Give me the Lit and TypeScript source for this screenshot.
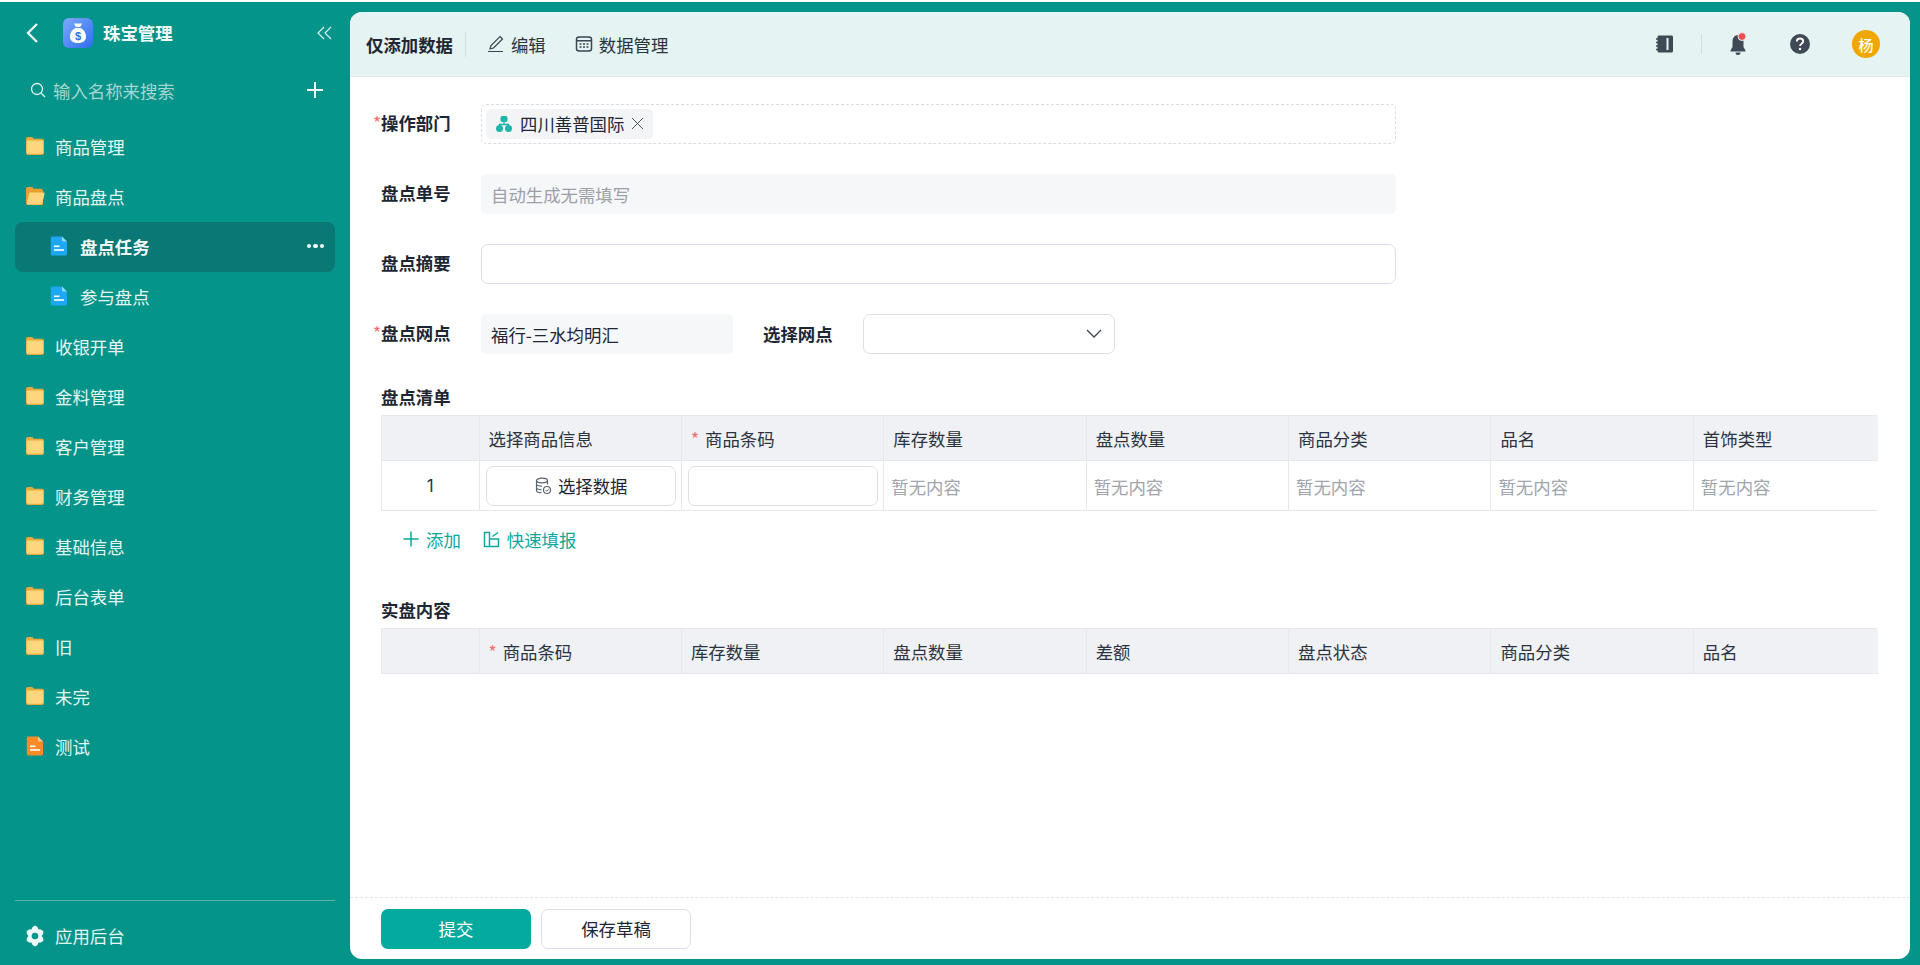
import { LitElement, html, css, svg } from 'lit'
import { customElement } from 'lit/decorators.js'

const folder = svg`<svg class="ico" width="20" height="20" viewBox="0 0 20 20"><path d="M1 3C1 1.800 1.900 1 3 1h3.600c.7 0 1.100.3 1.500.8l.7 1H17c1.200 0 2 .8 2 2V17c0 1.200-.8 2-2 2H3c-1.100 0-2-.8-2-2z" fill="#e8a93c"/><path d="M1.700 6c0-.9.600-1.400 1.400-1.400h13.800c.8 0 1.400.5 1.400 1.400v10.300c0 .9-.6 1.400-1.400 1.400H3.100c-.8 0-1.400-.5-1.400-1.400z" fill="#ffd67d"/></svg>`

const folderOpen = svg`<svg class="ico" width="20" height="20" viewBox="0 0 20 20"><path d="M1 3C1 1.800 1.900 1 3 1h3.600c.7 0 1.100.3 1.500.8l.7 1H16c1.200 0 2 .8 2 2v14.200H3c-1.100 0-2-.8-2-2z" fill="#e8a02c"/><path d="M5.200 6.500h13c.9 0 1.500.7 1.300 1.500l-2.200 9.200c-.2.800-.9 1.300-1.700 1.300H3c-.9 0-1.300-.6-1.100-1.400l2-9c.2-.9.500-1.600 1.300-1.600z" fill="#ffd67d"/></svg>`

const doc = (c: string) => svg`<svg class="ico" width="18" height="20" viewBox="0 0 18 20"><path d="M2.500 .5h9.500l5 5v12.300c0 1-.8 1.700-1.700 1.700H2.500c-1 0-1.700-.7-1.700-1.700V2.200C.8 1.200 1.500.5 2.500.5z" fill="${c}"/><path d="M12 .5l5 5h-3.400c-.9 0-1.600-.7-1.600-1.600z" fill="#ffffff" opacity=".55"/><rect x="4" y="9.500" width="5.500" height="1.600" fill="#fff"/><rect x="4" y="13.200" width="10" height="1.600" fill="#fff"/></svg>`

const gear = svg`<svg width="20" height="22" viewBox="0 0 24 26"><path fill-rule="evenodd" fill="#eef8f7" d="M12 .5l3 1.800 1 2.600 2.900.2 3 1.900v3.400L20 13l1.900 2.600V19l-3 1.900-2.900.2-1 2.600-3 1.800-3-1.800-1-2.600-2.900-.2-3-1.900v-3.400L4 13l-1.900-2.600V7l3-1.900 2.900-.2 1-2.600zM12 9a4 4 0 1 0 0 8 4 4 0 0 0 0-8z"/></svg>`

interface MenuItem { name: string; icon: unknown; sub?: boolean; active?: boolean; file?: boolean }

const menu: MenuItem[] = [
  { name: '商品管理', icon: folder },
  { name: '商品盘点', icon: folderOpen },
  { name: '盘点任务', icon: doc('#1ea7f2'), sub: true, active: true },
  { name: '参与盘点', icon: doc('#1ea7f2'), sub: true },
  { name: '收银开单', icon: folder },
  { name: '金料管理', icon: folder },
  { name: '客户管理', icon: folder },
  { name: '财务管理', icon: folder },
  { name: '基础信息', icon: folder },
  { name: '后台表单', icon: folder },
  { name: '旧', icon: folder },
  { name: '未完', icon: folder },
  { name: '测试', icon: doc('#fb8b24'), file: true }
]

const listCols = ['库存数量', '盘点数量', '商品分类', '品名', '首饰类型']
const realCols = ['库存数量', '盘点数量', '差额', '盘点状态', '商品分类', '品名']

@customElement('app-root')
export class AppRoot extends LitElement {
  static styles = css`
    :host {
      display: flex;
      flex-direction: column;
      width: 1920px;
      height: 965px;
      overflow: hidden;
      background: #05948a;
      font-family: 'Noto Sans CJK SC', 'Noto Sans', sans-serif;
      font-size: 17.4px;
      color: #1f2633;
    }
    .stripe { height: 2px; background: #fff; flex: none; }
    .body { flex: 1; display: flex; min-height: 0; }

    .side { width: 350px; flex: none; display: flex; flex-direction: column; color: #e6f4f2; }
    .side-head { height: 62px; display: flex; align-items: center; padding: 0 18px 0 25px; }
    .back { width: 38px; flex: none; display: flex; }
    .logo { flex: none; display: flex; margin-right: 10px; }
    .app-name { font-weight: 700; color: #f2faf9; flex: 1; padding-bottom: 2px; }
    .collapse { display: flex; }
    .search { height: 50px; margin-top: 1px; margin-bottom: 1px; display: flex; align-items: center; padding: 0 26px 0 30px; }
    .search svg:first-child { margin-right: 7px; }
    .search span { flex: 1; color: #a6d6d1; }
    .menu { margin-top: 6px; flex: 1; }
    .row { height: 50px; box-sizing: border-box; padding-bottom: 2px; display: flex; align-items: center; padding-left: 25px; }
    .row .ico { margin-right: 10px; flex: none; }
    .row.file { padding-left: 26px; }
    .row.file .ico { margin-right: 11px; }
    .row.sub { padding-left: 50px; }
    .row.sub .ico { margin-right: 12px; }
    .row.active { margin: 0 15px; padding-left: 35px; padding-right: 11px; background: #0a7875; border-radius: 8px; font-weight: 700; color: #f2faf9; }
    .row.active span { flex: 1; }
    .dots { display: flex; gap: 2px; }
    .dots i { width: 4.500px; height: 4.500px; border-radius: 50%; background: #eef8f7; }
    .side-foot { margin: 0 15px; height: 65px; box-sizing: border-box; border-top: 1px solid #55b3ab; display: flex; align-items: center; padding: 5px 0 0 10px; gap: 10px; }

    .main { flex: 1; margin: 10px 10px 6px 0; background: #fff; border-radius: 12px; overflow: hidden; display: flex; flex-direction: column; min-width: 0; }
    .top { height: 65px; flex: none; background: #e5f3f2; border-bottom: 1px solid #e3e8ea; display: flex; align-items: center; padding: 0 30px 0 16px; box-sizing: border-box; }
    .top b { font-weight: 700; }
    .vsep { width: 1px; background: #d5dfe0; }
    .title-sep { height: 25px; margin: 0 21px 0 12px; }
    .tool { display: flex; align-items: center; gap: 6px; margin-right: 29px; color: #2b3340; }
    .spacer { flex: 1; }
    .icons { display: flex; align-items: center; }
    .icons svg { display: block; }
    .icons .vsep { height: 20px; margin: 0 26px 0 26px; }
    .help { margin: 0 41px 0 41px; }
    .avatar { width: 28px; height: 28px; border-radius: 50%; background: #f0a800; color: #fff; font-size: 15px; display: flex; align-items: center; justify-content: center; font-weight: 500; }

    .form { flex: 1; padding: 27px 32px 0 31px; min-height: 0; }
    .field { display: flex; align-items: center; height: 40px; margin-bottom: 30px; }
    .label { width: 100px; flex: none; font-weight: 700; padding-bottom: 2px; line-height: 24px; }
    .star { color: #f56c6c; font-weight: 400; margin-left: -8px; display: inline-block; width: 8px; }
    .box { width: 915px; height: 40px; box-sizing: border-box; border-radius: 5px; display: flex; align-items: center; padding: 0 10px; }
    .dashed { border: 1px dashed #d9dce2; padding: 0 4px; }
    .grey { background: #f6f7f9; }
    .hint { color: #9ba0a8; }
    .plain { border: 1px solid #dcdfe8; border-radius: 7px; }
    .tag { height: 29px; background: #f3f4f6; border-radius: 5px; display: flex; align-items: center; padding: 0 9px 1px 10px; gap: 8px; }
    .tag .x { display: flex; margin-left: -1px; }
    .narrow { width: 252px; }
    .label2 { margin-left: 30px; width: 100px; flex: none; font-weight: 700; padding-bottom: 2px; }
    .select { width: 252px; justify-content: flex-end; padding-right: 12px; }

    .sec { font-weight: 700; height: 27px; line-height: 26px; margin-bottom: 4px; }
    .grid { width: 1497px; overflow: hidden; border-radius: 2px 2px 0 0; border-left: 1px solid #e6e8ee; border-top: 1px solid #e6e8ee; box-sizing: border-box; }
    .tr { display: grid; grid-template-columns: 97.500px repeat(7, 202.400px); }
    .th, .td { box-sizing: border-box; border-right: 1px solid #e6e8ee; border-bottom: 1px solid #e6e8ee; display: flex; align-items: center; }
    .th { height: 45px; background: #f0f1f5; padding-left: 9px; color: #2b3340; }
    .td { height: 50px; padding: 0 5px 0 5px; }
    .td.num { justify-content: center; font-family: Inter, sans-serif; font-size: 17px; color: #26344a; padding: 0; }
    .td .empty { color: #a0a4ab; padding: 2px 0 0 2px; }
    .req { color: #f56c6c; margin-right: 6px; }
    .pick { flex: 1; height: 40px; box-sizing: border-box; margin-left: 1px; border: 1px solid #dcdfe8; border-radius: 7px; display: flex; align-items: center; justify-content: center; gap: 6px; }
    .cell-input { flex: 1; height: 40px; box-sizing: border-box; margin-left: 1px; border: 1px solid #dcdfe8; border-radius: 7px; }
    .add { height: 56px; display: flex; align-items: center; padding-left: 22px; color: #0aa89e; margin-bottom: 30px; }
    .add span { display: flex; align-items: center; gap: 7px; margin-right: 22px; }

    .foot { height: 62px; flex: none; border-top: 1px dashed #e3e5ea; box-sizing: border-box; display: flex; gap: 10px; padding: 11px 0 0 31px; }
    .btn { width: 150px; height: 40px; box-sizing: border-box; border-radius: 7px; display: flex; align-items: center; justify-content: center; padding-bottom: 2px; }
    .primary { background: #05aa9e; color: #fff; }
    .ghost { border: 1px solid #dcdfe8; }
  `

  renderMenu () {
    return menu.map(m => html`
      <div class="row ${m.sub ? 'sub' : ''} ${m.active ? 'active' : ''} ${m.file ? 'file' : ''}">
        ${m.icon}<span>${m.name}</span>
        ${m.active ? html`<div class="dots"><i></i><i></i><i></i></div>` : ''}
      </div>
    `)
  }

  renderSide () {
    return html`
      <aside class="side">
        <div class="side-head">
          <div class="back"><svg width="14" height="22" viewBox="0 0 14 22"><path d="M12 2L3 11l9 9" fill="none" stroke="#f2faf9" stroke-width="2.200"/></svg></div>
          <div class="logo">
            <svg width="30" height="30" viewBox="0 0 30 30">
              <defs><linearGradient id="lg" x1="0" y1="0" x2="1" y2="1"><stop offset="0" stop-color="#7daafc"/><stop offset="1" stop-color="#2f6df0"/></linearGradient></defs>
              <rect width="30" height="30" rx="6" fill="url(#lg)"/>
              <path d="M11 5.500h8l-1.800 3.500h-4.400zM12.500 10h5c3.500 1.800 5.500 5 5.500 8.500 0 4-2.600 6.500-8 6.500s-8-2.500-8-6.500c0-3.500 2-6.700 5.500-8.500z" fill="#fff"/>
              <text x="15" y="22" text-anchor="middle" font-size="11" font-weight="700" font-family="Liberation Sans" fill="#2f6df0">$</text>
            </svg>
          </div>
          <span class="app-name">珠宝管理</span>
          <div class="collapse"><svg width="15" height="14" viewBox="0 0 15 14"><path d="M7 1L1 7l6 6M14 1L8 7l6 6" fill="none" stroke="#dcefed" stroke-width="1.200"/></svg></div>
        </div>
        <div class="search">
          <svg width="16" height="16" viewBox="0 0 16 16"><circle cx="7" cy="7" r="5.500" fill="none" stroke="#e6f4f2" stroke-width="1.300"/><path d="M11 11l4 4" stroke="#e6f4f2" stroke-width="1.300"/></svg>
          <span>输入名称来搜索</span>
          <svg width="18" height="18" viewBox="0 0 18 18"><path d="M9 1v16M1 9h16" stroke="#eef8f7" stroke-width="2"/></svg>
        </div>
        <div class="menu">${this.renderMenu()}</div>
        <div class="side-foot">${gear}<span>应用后台</span></div>
      </aside>
    `
  }

  renderTop () {
    return html`
      <div class="top">
        <b>仅添加数据</b>
        <div class="vsep title-sep"></div>
        <div class="tool">
          <svg width="18" height="18" viewBox="0 0 18 18"><path d="M13 1.500l2.500 2.500-9 9-3.500 1 1-3.500zM1 16.500h15" fill="none" stroke="#3b4552" stroke-width="1.200"/></svg>
          编辑
        </div>
        <div class="tool">
          <svg width="18" height="18" viewBox="0 0 18 18"><rect x="1.500" y="2" width="15" height="14" rx="2.500" fill="none" stroke="#3b4552" stroke-width="1.500"/><path d="M2 5.700h14" stroke="#3b4552" stroke-width="1.500"/><path d="M4.500 9h2M8 9h2M11.500 9h2M4.500 12h2M8 12h2M11.500 12h2" stroke="#3b4552" stroke-width="1.500"/></svg>
          数据管理
        </div>
        <div class="spacer"></div>
        <div class="icons">
          <svg width="20" height="20" viewBox="0 0 20 20"><path d="M4 1.500h12.500c1 0 1.500.6 1.500 1.500v14c0 .9-.5 1.500-1.500 1.500H4c-.9 0-1.500-.6-1.500-1.500V3c0-.9.600-1.500 1.500-1.500z" fill="#3f4a56"/><path d="M1 5h3M1 8.500h3M1 12h3M1 15.500h3" stroke="#3f4a56" stroke-width="1.500"/><rect x="11.500" y="4" width="2" height="12" fill="#e5f3f2"/></svg>
          <div class="vsep"></div>
          <svg width="20" height="24" viewBox="0 0 20 24"><path d="M10 3c-3.500 0-5.500 3-5.500 6.500v5.500L2.500 18.500v1h15v-1L15.500 15V9.500C15.500 6 13.500 3 10 3z" fill="#3f4a56"/><path d="M7.500 20.500h5a2.500 2.500 0 0 1-5 0z" fill="#3f4a56"/><circle cx="14" cy="4.500" r="4" fill="#f04f55" stroke="#e5f3f2" stroke-width="1"/></svg>
          <div class="help">
            <svg width="22" height="22" viewBox="0 0 22 22"><circle cx="11" cy="11" r="10" fill="#3f4a56"/><path d="M7.800 8.500c0-1.900 1.400-3 3.200-3s3.200 1.200 3.200 2.800c0 2.500-3.200 2.500-3.200 4.700" fill="none" stroke="#fff" stroke-width="1.800"/><circle cx="11" cy="16" r="1.200" fill="#fff"/></svg>
          </div>
          <div class="avatar">杨</div>
        </div>
      </div>
    `
  }

  renderForm () {
    return html`
      <div class="form">
        <div class="field">
          <div class="label"><span class="star">*</span>操作部门</div>
          <div class="box dashed">
            <div class="tag">
              <svg width="16" height="16" viewBox="0 0 16 16"><rect x="4.500" y="0" width="7" height="6" rx="1.800" fill="#1fb5a8"/><path d="M8 6v2.500M3.500 11V8.500h9V11" fill="none" stroke="#1fb5a8" stroke-width="1.300"/><circle cx="3.500" cy="12.500" r="3.500" fill="#1fb5a8"/><circle cx="12.500" cy="12.500" r="3.500" fill="#1fb5a8"/></svg>
              四川善普国际
              <span class="x"><svg width="13" height="13" viewBox="0 0 13 13"><path d="M1 1l11 11M12 1L1 12" stroke="#4b5360" stroke-width="1"/></svg></span>
            </div>
          </div>
        </div>
        <div class="field">
          <div class="label">盘点单号</div>
          <div class="box grey hint">自动生成无需填写</div>
        </div>
        <div class="field">
          <div class="label">盘点摘要</div>
          <div class="box plain"></div>
        </div>
        <div class="field">
          <div class="label"><span class="star">*</span>盘点网点</div>
          <div class="box grey narrow">福行-三水均明汇</div>
          <div class="label2">选择网点</div>
          <div class="box plain select"><svg width="16" height="10" viewBox="0 0 16 10"><path d="M1 1l7 7 7-7" fill="none" stroke="#3b4552" stroke-width="1.300"/></svg></div>
        </div>

        <div class="sec">盘点清单</div>
        <div class="grid">
          <div class="tr">
            <div class="th"></div>
            <div class="th">选择商品信息</div>
            <div class="th"><span class="req">*</span>商品条码</div>
            ${listCols.map(c => html`<div class="th">${c}</div>`)}
          </div>
          <div class="tr">
            <div class="td num">1</div>
            <div class="td"><div class="pick">
              <svg width="18" height="18" viewBox="0 0 18 18"><ellipse cx="8" cy="3.500" rx="5.500" ry="2.300" fill="none" stroke="#5a6370" stroke-width="1.200"/><path d="M2.500 3.500v10c0 1.200 2.300 2.200 5 2.200M13.500 3.500v4M2.500 7c0 1.200 2.500 2.200 5.500 2.200M2.500 10.500c0 1.200 2.300 2.200 5 2.200" fill="none" stroke="#5a6370" stroke-width="1.200"/><circle cx="13" cy="13" r="3.500" fill="none" stroke="#5a6370" stroke-width="1.200"/><path d="M11.500 13l1.200 1.200 2-2" fill="none" stroke="#5a6370" stroke-width="1"/></svg>
              选择数据
            </div></div>
            <div class="td"><div class="cell-input"></div></div>
            ${listCols.map(() => html`<div class="td"><span class="empty">暂无内容</span></div>`)}
          </div>
        </div>
        <div class="add">
          <span><svg width="16" height="16" viewBox="0 0 16 16"><path d="M8 .5v15M.5 8h15" stroke="#0aa89e" stroke-width="1.500"/></svg>添加</span>
          <span><svg width="17" height="17" viewBox="0 0 17 17"><path d="M6.500 1.500H1.500v14h14V8h-9zV15.500" fill="none" stroke="#0aa89e" stroke-width="1.500"/><path d="M9.500 5.500L15 1.500" stroke="#0aa89e" stroke-width="1.500"/></svg>快速填报</span>
        </div>

        <div class="sec">实盘内容</div>
        <div class="grid">
          <div class="tr">
            <div class="th"></div>
            <div class="th"><span class="req">*</span>商品条码</div>
            ${realCols.map(c => html`<div class="th">${c}</div>`)}
          </div>
        </div>
      </div>
    `
  }

  render () {
    return html`
      <div class="stripe"></div>
      <div class="body">
        ${this.renderSide()}
        <main class="main">
          ${this.renderTop()}
          ${this.renderForm()}
          <div class="foot">
            <div class="btn primary">提交</div>
            <div class="btn ghost">保存草稿</div>
          </div>
        </main>
      </div>
    `
  }
}
